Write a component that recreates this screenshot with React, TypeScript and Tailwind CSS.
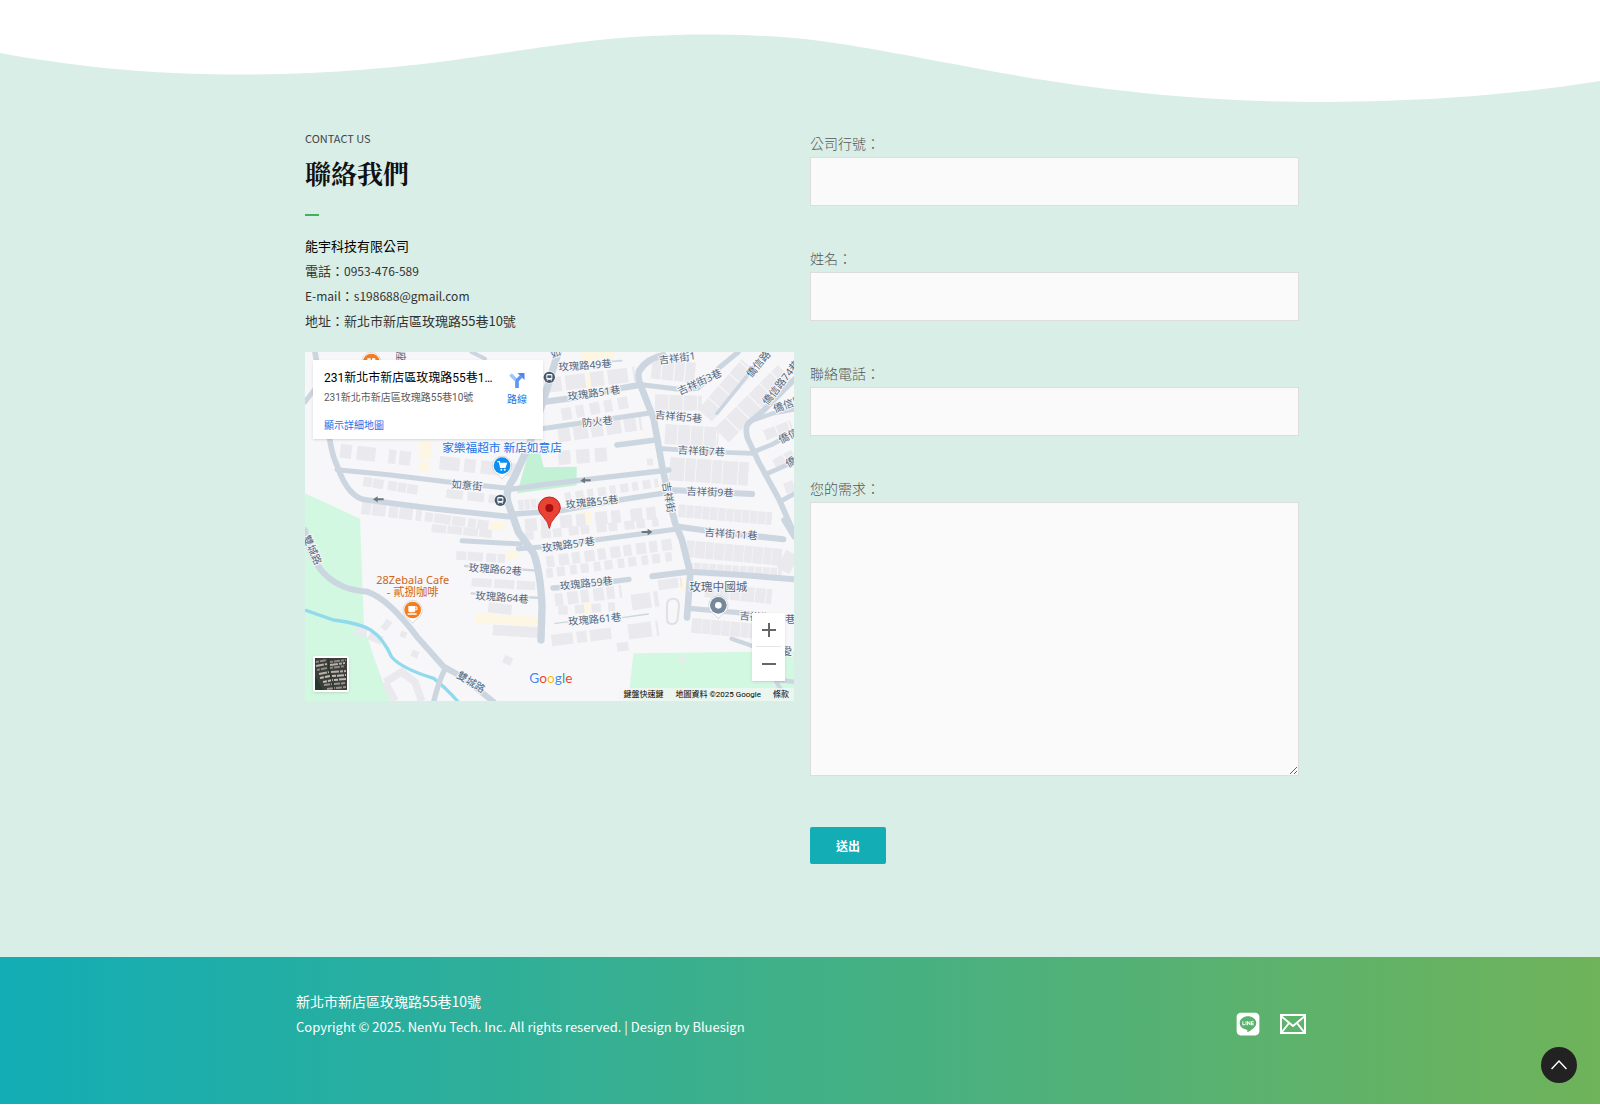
import React from 'react';
import { FaLine } from 'react-icons/fa';

const fields = [
  { id: 'company', label: '公司行號：', type: 'text' },
  { id: 'name', label: '姓名：', type: 'text' },
  { id: 'phone', label: '聯絡電話：', type: 'tel' },
];

// [path, width]
const roads: [string, number][] = [
  ['M760 0 L676 270 L626 380 Q596 420 612 460 L640 540 L686 604 Q706 660 711 760 L708 864', 22],
  ['M500 0 L540 20', 12],
  ['M30 0 L40 60 M66 200 Q76 300 96 340 Q130 440 186 444 L386 470 L610 494', 17],
  ['M0 150 L60 70', 14],
  ['M96 353 L250 368 L430 390 L620 410', 15],
  ['M615 412 L721 397 L900 376 L1092 354', 16],
  ['M630 486 L770 476 L942 444 L1110 418', 16],
  ['M700 152 L790 140 L950 108 L1010 98', 19],
  ['M700 232 L1040 182', 15],
  ['M936 279 L1052 264', 17],
  ['M1075 10 Q1025 20 1003 56 Q995 75 1010 108 L1046 200 L1071 340 L1096 460 L1111 515 L1131 564 L1156 664 L1150 744 L1146 796', 20],
  ['M1010 98 L1140 114 L1180 108 L1245 45 L1300 0', 15],
  ['M1236 184 L1310 92 L1380 0', 10],
  ['M1475 75 L1371 180 L1332 212 Q1318 225 1328 260 L1361 330 L1421 440 L1470 550', 17],
  ['M1345 205 L1400 185 L1470 172', 13],
  ['M1345 300 L1400 278 L1470 240', 14],
  ['M1380 368 L1470 328', 14],
  ['M1426 448 L1470 424', 14],
  ['M1071 290 L1220 300 L1345 304', 14],
  ['M1095 414 L1341 426', 18],
  ['M1121 524 L1191 534 L1435 562', 18],
  ['M640 590 L720 584 L871 564 L1111 532', 15],
  ['M471 566 L646 576', 15],
  ['M480 642 L700 656 M500 724 L706 738', 7],
  ['M744 708 L800 704 L972 682', 16],
  ['M750 814 L800 808', 4],
  ['M930 800 L1030 786', 4],
  ['M780 40 L850 34 M900 30 L950 26', 5],
  ['M1042 673 L1151 659 L1300 668 L1467 682', 18],
  ['M1151 769 L1300 782 L1467 800', 16],
  ['M1280 860 L1361 889 L1420 1000 L1440 1030', 13],
  ['M1420 984 L1470 990', 14],
  ['M1436 504 L1467 555', 15],
  ['M0 534 Q20 660 106 699 Q130 714 186 719 Q250 740 336 854 L416 944 L480 980 L566 1050', 18],
  ['M421 949 Q400 990 386 1050', 16],
];

// rows of houses: [path, depth, dash pattern]
const houses: [string, number, string][] = [
  ['M106 296 L330 322', 42, '34 16 56 40 22 10'],
  ['M404 332 L640 356', 40, '60 14 34 16'],
  ['M175 388 L350 416', 28, '26 3 32 14 26 3'],
  ['M424 424 L590 444', 26, '50 14'],
  ['M170 468 L350 490', 36, '28 4 40 10'],
  ['M360 494 L550 520', 28, '24 4 50 4 40 8'],
  ['M380 528 L560 546', 24, '44 4'],
  ['M454 610 L600 620', 26, '30 4 46 10'],
  ['M500 690 L690 702', 26, '60 8'],
  ['M550 766 L620 774', 30, '72 12'],
  ['M564 834 L706 842', 32, '146 0'],
  ['M730 100 L990 66', 44, '40 12 60 16'],
  ['M770 188 L970 150', 36, '30 14 24 18'],
  ['M760 252 L1010 214', 40, '36 10 44 10'],
  ['M760 318 L920 306', 42, '36 18 40 16'],
  ['M1026 330 L1044 330', 20, '18 0'],
  ['M640 460 L700 454', 30, '16 3'],
  ['M780 436 L1060 392', 26, '18 14 24 12'],
  ['M660 520 L1080 480', 38, '36 12 28 30'],
  ['M660 552 L1060 510', 26, '26 22 30 6'],
  ['M724 630 L1110 575', 34, '24 14 30 10'],
  ['M724 664 L1110 612', 28, '20 12 24 16'],
  ['M750 744 L950 718', 38, '24 14 32 8'],
  ['M760 776 L930 764', 26, '28 22'],
  ['M740 866 L930 842', 34, '64 12 30 10'],
  ['M980 752 L1060 740', 46, '58 10'],
  ['M970 840 L1060 828', 46, '70 14'],
  ['M1060 700 L1130 690', 30, '60 6'],
  ['M1040 50 L1170 62', 60, '28 4 34 4'],
  ['M1050 150 L1190 154', 46, '40 3'],
  ['M1080 246 L1240 256', 60, '36 3'],
  ['M1094 350 L1330 366', 70, '44 3 30 3'],
  ['M1120 476 L1400 500', 38, '22 2'],
  ['M1144 590 L1430 616', 50, '24 2 30 2'],
  ['M1144 642 L1430 660', 22, '20 3'],
  ['M1200 714 L1400 734', 44, '30 3 40 3'],
  ['M1160 820 L1420 844', 44, '30 2 24 2'],
  ['M1200 190 L1330 40', 54, '44 4'],
  ['M1250 250 L1440 60', 60, '44 4'],
  ['M1380 250 L1460 220', 32, '36 4'],
  ['M1410 340 L1467 310', 36, '34 4'],
  ['M1440 410 L1467 400', 32, '34 4'],
  ['M1430 620 L1467 640', 60, '50 4'],
  ['M150 834 L184 844', 26, '40 0'],
  ['M192 850 L232 866', 26, '50 0'],
  ['M234 832 L254 806', 20, '40 0'],
  ['M286 844 L304 850', 18, '40 0'],
  ['M320 902 L340 910', 20, '40 0'],
  ['M596 920 L620 930', 24, '40 0'],
  ['M936 886 L970 882', 26, '40 0'],
  ['M1124 922 L1140 926', 16, '40 0'],
];

const labels: { text: string; x: number; y: number; r: number }[] = [
  { text: '玫瑰路49巷', x: 840, y: 40, r: -4 },
  { text: '玫瑰路51巷', x: 867, y: 123, r: -8 },
  { text: '防火巷', x: 877, y: 209, r: -5 },
  { text: '吉祥街1', x: 1116, y: 18, r: -7 },
  { text: '吉祥街3巷', x: 1184, y: 90, r: -25 },
  { text: '吉祥街5巷', x: 1121, y: 194, r: 5 },
  { text: '吉祥街7巷', x: 1189, y: 297, r: 3 },
  { text: '吉祥街9巷', x: 1215, y: 420, r: 2 },
  { text: '玫瑰路55巷', x: 861, y: 450, r: -6 },
  { text: '如意街', x: 486, y: 400, r: 5 },
  { text: '玫瑰路57巷', x: 790, y: 578, r: -8 },
  { text: '吉祥街11巷', x: 1278, y: 546, r: 4 },
  { text: '玫瑰路62巷', x: 571, y: 652, r: 4 },
  { text: '玫瑰路64巷', x: 591, y: 736, r: 4 },
  { text: '玫瑰路59巷', x: 844, y: 694, r: -6 },
  { text: '玫瑰路61巷', x: 869, y: 802, r: -5 },
  { text: '吉祥街', x: 1091, y: 436, r: 80 },
  { text: '吉祥街', x: 1350, y: 794, r: 4 },
  { text: '巷', x: 1456, y: 802, r: 0 },
  { text: '愛', x: 1446, y: 898, r: 0 },
  { text: '僑信路', x: 1360, y: 36, r: -50 },
  { text: '僑信路74巷', x: 1428, y: 92, r: -52 },
  { text: '僑信路', x: 1450, y: 156, r: -20 },
  { text: '僑信路', x: 1464, y: 244, r: -28 },
  { text: '僑', x: 1458, y: 330, r: -30 },
  { text: '雙城路', x: 22, y: 594, r: 66 },
  { text: '雙城路', x: 498, y: 990, r: 32 },
  { text: '座', x: 286, y: 14, r: 90 },
  { text: '如', x: 752, y: 2, r: -20 },
];

const Pin: React.FC<{ x: number; y: number; color: string; children?: React.ReactNode }> = ({ x, y, color, children }) => (
  <g transform={`translate(${x} ${y})`}>
    <path d="M0 40 Q-8 28 -17 24 A29 29 0 1 1 17 24 Q8 28 0 40Z" fill="#fff" stroke="#c4c8cc" strokeWidth="2" />
    <circle r="25" fill={color} />
    {children}
  </g>
);

const Station: React.FC<{ x: number; y: number }> = ({ x, y }) => (
  <g transform={`translate(${x} ${y})`}>
    <circle r="19" fill="#f2f5f7" />
    <circle r="17" fill="#4a5a6e" />
    <rect x="-9" y="-10" width="18" height="17" rx="4" fill="#fff" />
    <rect x="-6" y="-6" width="12" height="8" fill="#4a5a6e" />
    <path d="M-6 7 V10 M6 7 V10" stroke="#fff" strokeWidth="3" />
  </g>
);

const MapDrawing: React.FC = () => (
  <svg
    className="block h-full w-full"
    viewBox="0 0 1467 1047"
    preserveAspectRatio="xMidYMid slice"
    fontFamily="'Noto Sans', 'Noto Sans CJK TC', sans-serif"
  >
    <rect width="1467" height="1047" fill="#f7f6f8" />
    <path d="M0 424 L165 500 L177 824 Q220 960 256 1047 H0Z" fill="#d3f8e2" />
    <path d="M985 904 L1467 898 V1047 H970Z" fill="#d3f8e2" />
    <path d="M670 304 H706 L716 346 L815 344 V400 L636 424Z" fill="#c3f1d5" />
    <g fill="#fcf6e3">
      <path d="M830 0 H930 L920 50 H830Z M846 60 H886 V110 H840Z M340 270 H380 V320 H344Z M345 330 H372 V360 H345Z" />
      <path d="M1170 250 H1204 V274 H1170Z M1126 680 H1148 V716 H1126Z M826 480 H860 V516 H830Z M836 750 H856 V784 H836Z" />
      <path d="M510 784 L700 794 V822 L510 812Z M556 510 H600 V534 H556Z M600 596 H640 V620 H600Z M290 470 H310 V500 H290Z" />
    </g>
    <g fill="none" stroke="#e9e9ee">
      {houses.map(([d, width, dash]) => (
        <path key={d} d={d} strokeWidth={width} strokeDasharray={dash} />
      ))}
      <path d="M240 990 L290 960 L330 990 L350 1047 M240 990 L270 1047" strokeWidth="22" />
    </g>
    <path d="M1086 760 Q1086 740 1104 740 Q1122 740 1122 760 L1118 800 Q1116 816 1102 816 Q1086 816 1086 800Z" fill="none" stroke="#dfe1e6" strokeWidth="6" />
    <path d="M0 774 L86 804 Q170 815 200 836 Q235 860 260 915 Q290 950 386 979 Q420 1005 460 1050" fill="none" stroke="#90daee" strokeWidth="10" />
    <g fill="none" stroke="#ccd6e0" strokeLinecap="round" strokeLinejoin="round">
      {roads.map(([d, width]) => (
        <path key={d} d={d} strokeWidth={width} />
      ))}
    </g>
    <g fill="#6c7682">
      <path d="M204 442 L218 433 V439 H236 V445 H218 V451Z" />
      <path d="M826 386 L840 376 V382 H857 V388 H840 V394Z" />
      <path d="M1042 540 L1028 530 V537 H1010 V543 H1028 V550Z" />
    </g>
    <g fontSize="31" fill="#56667c" stroke="#f7f8fa" strokeWidth="6" strokeLinejoin="round" paintOrder="stroke" textAnchor="middle">
      {labels.map((item) => (
        <text key={`${item.text}-${item.x}`} transform={`translate(${item.x} ${item.y}) rotate(${item.r})`} y="11">
          {item.text}
        </text>
      ))}
      <text x="1240" y="717" fontSize="35">玫瑰中國城</text>
      <text x="591" y="300" fontSize="35" fill="#1a73e8">家樂福超市 新店如意店</text>
      <text x="323" y="695" fontSize="33" fill="#d0651c">28Zebala Cafe</text>
      <text x="323" y="732" fontSize="34" fill="#d0651c">- 貳捌咖啡</text>
    </g>
    <Station x={586} y={445} />
    <Station x={733} y={76} />
    <Pin x={199} y={30} color="#f57c1f">
      <path d="M-12 -8 H-2 M2 -8 H12" stroke="#fff" strokeWidth="6" />
    </Pin>
    <Pin x={591} y={341} color="#0e8ff0">
      <path d="M-14 -12 H-8 L-4 5 H9 L13 -7 H-6" fill="none" stroke="#fff" strokeWidth="4" />
      <path d="M-6 -7 H13 L9 4 H-4Z" fill="#fff" />
      <circle cx="-2" cy="12" r="3" fill="#fff" />
      <circle cx="8" cy="12" r="3" fill="#fff" />
    </Pin>
    <Pin x={323} y={774} color="#f57c1f">
      <path d="M-13 -12 H8 V2 Q8 7 3 7 H-8 Q-13 7 -13 2Z M-15 10 H12 V14 H-15Z" fill="#fff" />
      <path d="M8 -9 H13 V-1 H8" fill="none" stroke="#fff" strokeWidth="3" />
    </Pin>
    <Pin x={1240} y={760} color="#76899b">
      <circle r="10" fill="#fff" />
    </Pin>
    <path d="M733 529 Q730 510 716 496 Q700 480 700 468 A33 33 0 1 1 766 468 Q766 480 750 496 Q736 510 733 529Z" fill="#ea4335" stroke="#c5221f" strokeWidth="3" />
    <circle cx="733" cy="468" r="12" fill="#a50e0e" />
    <g fontSize="41" stroke="#fff" strokeWidth="4" paintOrder="stroke" fontFamily="Lato, sans-serif">
      <text x="673" y="993">
        <tspan fill="#4285f4">G</tspan>
        <tspan fill="#ea4335">o</tspan>
        <tspan fill="#fbbc05">o</tspan>
        <tspan fill="#4285f4">g</tspan>
        <tspan fill="#34a853">l</tspan>
        <tspan fill="#ea4335">e</tspan>
      </text>
    </g>
  </svg>
);

const Satellite: React.FC = () => (
  <svg className="block h-full w-full" viewBox="0 0 32 32">
    <rect width="32" height="32" fill="#3a3f3c" />
    <g fill="none" strokeWidth="2">
      <path d="M1 4 L12 2 M15 4 L31 2 M2 12 L12 10 M15 10 L30 8" stroke="#8f8781" strokeDasharray="3 1 6 1" />
      <path d="M1 8 L12 6 M15 7 L30 5 M4 16 L14 14 M16 14 L31 13" stroke="#b9b0a6" strokeDasharray="8 1 3 1" />
      <path d="M5 20 L15 18 M17 18 L31 17 M8 24 L18 22 M19 22 L31 21" stroke="#c4bbb0" strokeDasharray="4 1 7 1" />
      <path d="M9 27 L18 26 M19 26 L31 25 M12 31 L20 30 M21 30 L31 29" stroke="#9a918a" strokeDasharray="6 1 4 1" />
    </g>
    <path d="M0 18 L8 32 H0Z" fill="#26382d" />
    <path d="M13 0 L14 12 L19 32" fill="none" stroke="#2a302d" />
  </svg>
);

const LocationMap: React.FC = () => (
  <div className="relative mt-[19px] h-[349px] overflow-hidden font-[Roboto,'Noto_Sans_CJK_TC',sans-serif]">
    <MapDrawing />

    {/* Place card */}
    <div className="absolute top-2 left-2 flex h-[79px] w-[230px] justify-between bg-white pt-2 pr-4 pl-[11px] shadow">
      <div className="min-w-0">
        <p className="w-[170px] truncate text-[12px] leading-5 text-black">231新北市新店區玫瑰路55巷10號</p>
        <p className="text-[10px] leading-5 text-[#5b5b5b]">231新北市新店區玫瑰路55巷10號</p>
        <a href="#map" className="mt-2 block text-[10px] leading-5 text-[#1a73e8]">顯示詳細地圖</a>
      </div>
      <a href="#directions" className="flex flex-col items-center pt-1 text-[10px] leading-6 text-[#1a73e8]">
        <svg className="h-4 w-4" viewBox="0 0 16 16" fill="none">
          <path d="M8 16 V10 Q8 9 7 8 L1.500 2.500" stroke="#a3c4f7" strokeWidth="3.500" />
          <path d="M8 16 V10 Q8 8.500 9 7.500 L12 4.500" stroke="#5e97f6" strokeWidth="3.500" />
          <path d="M8.500 1 H15.500 V8Z" fill="#4a87ee" />
        </svg>
        路線
      </a>
    </div>

    <button type="button" aria-label="衛星檢視" className="absolute bottom-[9px] left-2 h-9 w-9 rounded-xs border-2 border-white shadow">
      <Satellite />
    </button>

    {/* Zoom buttons */}
    <div className="absolute right-[9px] bottom-5 flex w-[33px] flex-col bg-white shadow">
      {['放大', '縮小'].map((name, i) => (
        <button key={name} type="button" aria-label={name} className="flex h-[34px] items-center justify-center">
          <svg className="h-[14px] w-[14px]" viewBox="0 0 14 14" stroke="#666" strokeWidth="2">
            <path d={i === 0 ? 'M0 7 H14 M7 0 V14' : 'M0 7 H14'} />
          </svg>
        </button>
      ))}
      <div className="absolute top-[33px] right-1 left-1 h-px bg-[#e6e6e6]" />
    </div>

    <div className="absolute right-0 bottom-0 flex h-[13px] items-center gap-3 bg-[#f5f5f5]/70 px-[5px] text-[8px] leading-3 text-black">
      <button type="button">鍵盤快速鍵</button>
      <span>地圖資料 ©2025 Google</span>
      <a href="#terms">條款</a>
    </div>
  </div>
);

const ContactForm: React.FC = () => (
  <form className="pt-0.5" onSubmit={(e) => e.preventDefault()}>
    {fields.map((field) => (
      <div key={field.id} className="mb-[39px]">
        <label htmlFor={field.id} className="block text-sm leading-[27px] font-light text-[#555]">
          {field.label}
        </label>
        <input id={field.id} type={field.type} className="block h-[49px] w-full border border-[#ddd] bg-[#fafafa] px-4 text-sm outline-none" />
      </div>
    ))}
    <label htmlFor="message" className="block text-sm leading-[27px] font-light text-[#555]">
      您的需求：
    </label>
    <textarea id="message" className="block h-[274px] w-full resize border border-[#ddd] bg-[#fafafa] p-4 text-sm outline-none" />
    <button type="submit" className="mt-[51px] h-[37px] w-[76px] rounded-xs bg-[#12adb5] text-xs font-bold text-white">
      送出
    </button>
  </form>
);

const App: React.FC = () => {
  return (
    <div className="bg-white pb-px font-['Noto_Sans_CJK_TC',sans-serif]">
      <section className="bg-[#d9eee7] pb-[93px]">
        <svg className="block h-[104px] w-full" viewBox="0 0 1600 104" preserveAspectRatio="none" fill="#fff">
          <path d="M0 0 H1600 V81 Q1470 102 1325 102 C1190 102 1080 88 980 69 C910 56 870 48 828 42 C785 36 745 34.500 704 34.500 C610 34.500 540 48 468 58 C400 68 320 74.500 240 74.500 C150 74.500 70 66 0 53Z" />
        </svg>

        <div className="mx-auto grid max-w-[998px] gap-4 pt-6 pl-1 md:grid-cols-2">
          <div>
            <p className="text-[11px] leading-[21px] text-[#444]">CONTACT US</p>
            <h2 className="font-['Noto_Serif_CJK_TC','Noto_Serif_TC','Noto_Sans_CJK_TC',serif] text-[26px] leading-12 font-bold text-[#111]">
              聯絡我們
            </h2>
            <div className="mt-[17px] h-0.5 w-[14px] bg-[#3fb35c]" />
            <div className="mt-[17px] text-[13px] leading-[25px] text-[#333]">
              <p className="text-black">能宇科技有限公司</p>
              <p>電話：<span className="text-xs leading-none">0953-476-589</span></p>
              <p><span className="text-xs leading-none">E-mail</span>：<span className="text-xs leading-none">s198688@gmail.com</span></p>
              <p>地址：新北市新店區玫瑰路55巷10號</p>
            </div>
            <LocationMap />
          </div>
          <ContactForm />
        </div>
      </section>

      <footer className="bg-linear-to-r/srgb from-[#12adb5] to-[#6fb35a]">
        <div className="mx-auto flex max-w-[1012px] items-center justify-between pt-[31px] pb-16 pl-0.5">
          <div className="text-sm leading-[26px] text-white">
            <p>新北市新店區玫瑰路55巷10號</p>
            <p className="text-[13px] leading-[26px]">Copyright © 2025. NenYu Tech. Inc. All rights reserved. | Design by Bluesign</p>
          </div>
          <div className="flex items-center gap-5 pt-5 text-white">
            <a href="#line" aria-label="LINE">
              <FaLine className="h-[26px] w-6" />
            </a>
            <a href="mailto:s198688@gmail.com" aria-label="E-mail">
              <svg className="h-5 w-[26px]" viewBox="0 0 26 20" fill="none" stroke="currentColor" strokeWidth="2">
                <rect x="1" y="1" width="24" height="18" />
                <path d="M1 2 L13 12 L25 2 M2 18 L9 9 M24 18 L17 9" />
              </svg>
            </a>
          </div>
        </div>
      </footer>

      <button
        type="button"
        aria-label="回到頂端"
        onClick={() => window.scrollTo({ top: 0, behavior: 'smooth' })}
        className="fixed right-[23px] bottom-[22px] flex h-9 w-9 items-center justify-center rounded-full bg-[#222]"
      >
        <svg className="h-4 w-4" viewBox="0 0 16 16" fill="none" stroke="#fff" strokeWidth="1.500">
          <path d="M0.500 12 L8 4 L15.500 12" />
        </svg>
      </button>
    </div>
  );
};

export default App;
